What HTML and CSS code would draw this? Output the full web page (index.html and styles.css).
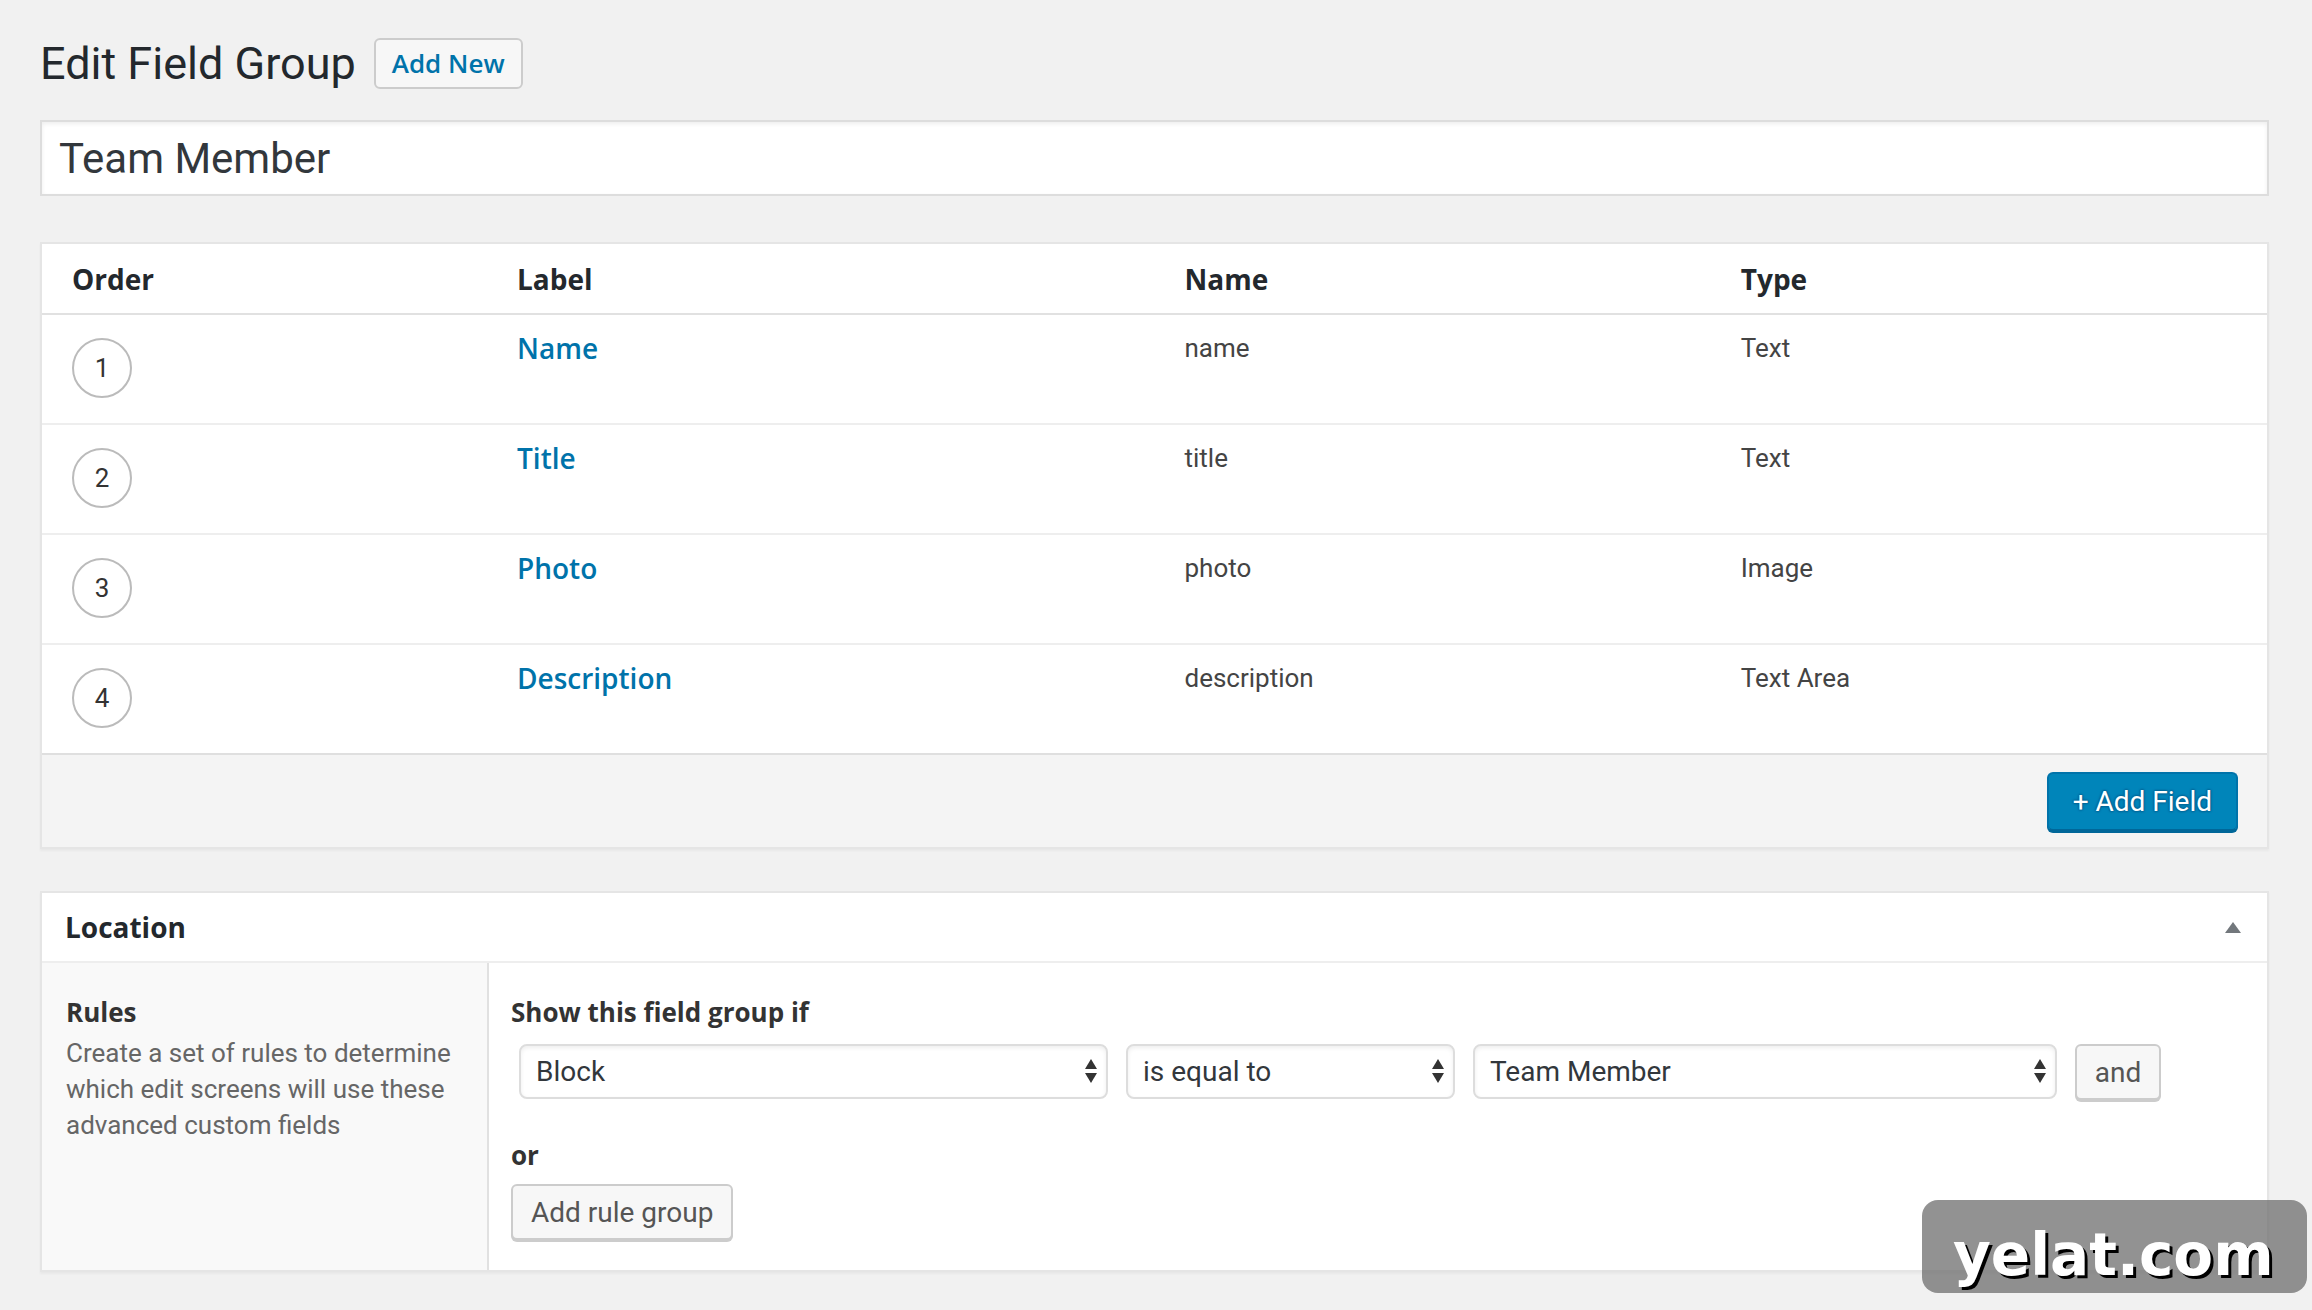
FILE: index.html
```html
<!DOCTYPE html>
<html>
<head>
  <meta charset="utf-8" />
  <title>Edit Field Group</title>
  <link rel="stylesheet" href="styles.css">
</head>
<body>

<div class="wrap">
  <div class="page-head">
    <h1>Edit Field Group</h1>
    <a class="add-new" href="#">Add New</a>
  </div>

  <div class="title-input">Team Member</div>

  <div class="postbox fields">
    <div class="fields-head">
      <div class="cell">Order</div>
      <div class="cell">Label</div>
      <div class="cell">Name</div>
      <div class="cell">Type</div>
    </div>

    <div class="field-row">
      <div class="cell"><span class="order-num">1</span></div>
      <div class="cell field-label"><a href="#">Name</a></div>
      <div class="cell">name</div>
      <div class="cell">Text</div>
    </div>
    <div class="field-row">
      <div class="cell"><span class="order-num">2</span></div>
      <div class="cell field-label"><a href="#">Title</a></div>
      <div class="cell">title</div>
      <div class="cell">Text</div>
    </div>
    <div class="field-row">
      <div class="cell"><span class="order-num">3</span></div>
      <div class="cell field-label"><a href="#">Photo</a></div>
      <div class="cell">photo</div>
      <div class="cell">Image</div>
    </div>
    <div class="field-row last">
      <div class="cell"><span class="order-num">4</span></div>
      <div class="cell field-label"><a href="#">Description</a></div>
      <div class="cell">description</div>
      <div class="cell">Text Area</div>
    </div>

    <div class="fields-foot">
      <a class="button-primary" href="#">+ Add Field</a>
    </div>
  </div>

  <div class="postbox location">
    <div class="box-head">
      <h2>Location</h2>
      <svg class="toggle" width="16" height="11" viewBox="0 0 16 11"><polygon points="8,0 16,11 0,11" fill="#72777c"/></svg>
    </div>
    <div class="box-body">
      <div class="side">
        <div class="side-label">Rules</div>
        <p class="desc">Create a set of rules to determine which edit screens will use these advanced custom fields</p>
      </div>
      <div class="main">
        <div class="side-label main-label">Show this field group if</div>
        <div class="rule-row">
          <div class="select sel-param">Block
            <svg class="arrows" width="12" height="25" viewBox="0 0 12 25"><polygon points="6,0 12,10 0,10" fill="#333"/><polygon points="0,14 12,14 6,24" fill="#333"/></svg>
          </div>
          <div class="select sel-op">is equal to
            <svg class="arrows" width="12" height="25" viewBox="0 0 12 25"><polygon points="6,0 12,10 0,10" fill="#333"/><polygon points="0,14 12,14 6,24" fill="#333"/></svg>
          </div>
          <div class="select sel-value">Team Member
            <svg class="arrows" width="12" height="25" viewBox="0 0 12 25"><polygon points="6,0 12,10 0,10" fill="#333"/><polygon points="0,14 12,14 6,24" fill="#333"/></svg>
          </div>
          <a class="button and-btn" href="#">and</a>
        </div>
        <div class="side-label or">or</div>
        <a class="button add-rule" href="#">Add rule group</a>
      </div>
    </div>
  </div>
</div>

<div class="watermark">yelat.com</div>

</body>
</html>
```

FILE: styles.css
```css
body {
  margin: 0;
  min-height: 1310px;
  background: #f1f1f1;
  font-family: Roboto, "Liberation Sans", sans-serif;
  font-size: 26px;
  color: #444;
  position: relative;
}

.wrap {
  padding: 38px 43px 0 40px;
}

.page-head {
  display: flex;
  align-items: center;
  gap: 18px;
}

.page-head h1 {
  margin: 0;
  font-size: 45px;
  font-weight: 400;
  line-height: 51px;
  color: #23282d;
}

.add-new {
  font-family: "Open Sans", sans-serif;
  font-weight: 600;
  font-size: 26px;
  line-height: 47px;
  padding: 0 16px;
  color: #0073aa;
  background: #f7f7f7;
  border: 2px solid #ccc;
  border-radius: 6px;
  text-decoration: none;
}

.title-input {
  margin-top: 31px;
  height: 76px;
  box-sizing: border-box;
  display: flex;
  align-items: center;
  padding-left: 17px;
  background: #fff;
  border: 2px solid #ddd;
  box-shadow: inset 0 2px 4px rgba(0, 0, 0, 0.07);
  font-size: 42px;
  color: #32373c;
}

.postbox {
  background: #fff;
  border: 2px solid #e5e5e5;
  box-shadow: 0 2px 2px rgba(0, 0, 0, 0.04);
}

.fields {
  margin-top: 46px;
}

.fields-head,
.field-row {
  display: grid;
  grid-template-columns: 20% 30% 25% 25%;
}

.cell {
  padding: 0 30px;
}

.fields-head {
  padding: 15px 0 14px;
  border-bottom: 2px solid #e1e1e1;
  font-family: "Open Sans", sans-serif;
  font-weight: 700;
  font-size: 28px;
  line-height: 40px;
  color: #23282d;
}

.field-row {
  padding: 13px 0 25px;
  border-bottom: 2px solid #eee;
  line-height: 40px;
}

.field-row.last {
  border-bottom: 0;
}

.order-num {
  display: flex;
  align-items: center;
  justify-content: center;
  width: 56px;
  height: 56px;
  margin-top: 10px;
  border: 2px solid #bbb;
  border-radius: 50%;
  font-size: 26px;
  line-height: 1;
  color: #333;
}

.field-label {
  font-family: "Open Sans", sans-serif;
  font-weight: 600;
  font-size: 28px;
}

.field-label a {
  color: #0073aa;
  text-decoration: none;
}

.fields-foot {
  display: flex;
  justify-content: flex-end;
  padding: 17px 29px 16px;
  background: #f4f4f4;
  border-top: 2px solid #dfdfdf;
}

.button-primary {
  line-height: 55px;
  padding: 0 24px;
  font-size: 28px;
  color: #fff;
  text-decoration: none;
  background: #0085ba;
  border: 2px solid #0073aa;
  border-bottom-color: #006799;
  border-radius: 6px;
  box-shadow: 0 2px 0 #006799;
  text-shadow: 0 -1px 2px #006799, 1px 0 2px #006799, 0 1px 2px #006799, -1px 0 2px #006799;
}

.location {
  margin-top: 42px;
}

.box-head {
  display: flex;
  align-items: center;
  justify-content: space-between;
  padding: 14px 26px 14px 23px;
  border-bottom: 2px solid #eee;
}

.box-head h2 {
  margin: 0;
  font-family: "Open Sans", sans-serif;
  font-weight: 700;
  font-size: 28px;
  line-height: 40px;
  color: #23282d;
}

.box-body {
  display: flex;
}

.side {
  width: 447px;
  flex-shrink: 0;
  box-sizing: border-box;
  padding: 31px 24px;
  background: #f9f9f9;
  border-right: 2px solid #e1e1e1;
}

.side-label {
  margin-bottom: 5px;
  font-family: "Open Sans", sans-serif;
  font-weight: 700;
  font-size: 26px;
  line-height: 36px;
  color: #333;
}

.desc {
  margin: 0;
  font-size: 26px;
  line-height: 36px;
  color: #666;
}

.main {
  flex: 1;
  padding: 31px 24px 30px 22px;
}

.main-label {
  margin-bottom: 14px;
}

.rule-row {
  display: flex;
  gap: 18px;
  margin-left: 8px;
}

.select {
  display: flex;
  align-items: center;
  justify-content: space-between;
  height: 55px;
  box-sizing: border-box;
  padding: 0 9px 0 15px;
  background: #fff;
  border: 2px solid #ddd;
  border-radius: 8px;
  box-shadow: inset 0 2px 4px rgba(0, 0, 0, 0.07);
  font-size: 28px;
  color: #32373c;
}

.sel-param { width: 589px; }
.sel-op { width: 329px; }
.sel-value { width: 584px; }

.button {
  display: inline-flex;
  align-items: center;
  justify-content: center;
  box-sizing: border-box;
  font-size: 28px;
  color: #555;
  text-decoration: none;
  background: #f7f7f7;
  border: 2px solid #ccc;
  border-radius: 6px;
  box-shadow: 0 2px 0 #ccc;
}

.and-btn {
  width: 86px;
  height: 56px;
}

.or {
  margin: 37px 0 11px;
}

.add-rule {
  height: 56px;
  padding: 0 18px;
}

.watermark {
  position: absolute;
  left: 1922px;
  top: 1200px;
  width: 385px;
  height: 93px;
  box-sizing: border-box;
  padding: 22px 0 0 31px;
  border-radius: 16px;
  background: rgba(110, 110, 110, 0.75);
  font-family: "DejaVu Sans", sans-serif;
  font-weight: 700;
  font-size: 58px;
  line-height: 67px;
  color: #fff;
  text-shadow: 3px 3px 0 #000;
}
```
